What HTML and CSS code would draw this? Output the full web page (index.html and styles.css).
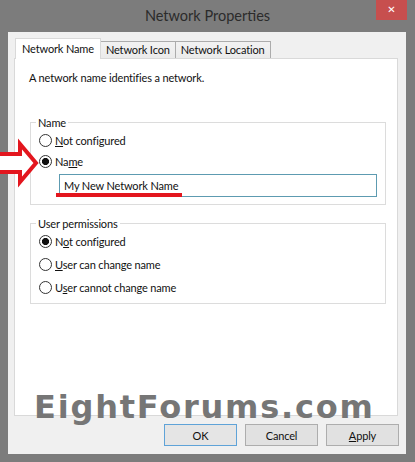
FILE: index.html
```html
<!DOCTYPE html>
<html lang="en">
<head>
<meta charset="utf-8">
<title>Network Properties</title>
<link rel="stylesheet" href="styles.css">
</head>
<body>
<div class="window">
  <div class="titlebar">
    <span></span>
    <span class="title">Network Properties</span>
    <button class="close" type="button" aria-label="Close">&#x2715;</button>
  </div>
  <div class="client">
    <div class="tabs">
      <div class="tab active">Network Name</div>
      <div class="tab">Network Icon</div>
      <div class="tab">Network Location</div>
    </div>
    <div class="panel">
      <p class="intro">A network name identifies a network.</p>
      <fieldset class="group group-name">
        <legend>Name</legend>
        <div class="rows rows-name">
          <label class="row"><input type="radio" name="n"><span><u>N</u>ot configured</span></label>
          <label class="row"><input type="radio" name="n" checked><span>Na<u>m</u>e</span></label>
        </div>
        <div class="field-wrap">
          <input class="textbox" type="text" value="My New Network Name">
          <span class="mark"></span>
        </div>
      </fieldset>
      <fieldset class="group group-perm">
        <legend>User permissions</legend>
        <div class="rows rows-perm">
          <label class="row"><input type="radio" name="p" checked><span>N<u>o</u>t configured</span></label>
          <label class="row"><input type="radio" name="p"><span><u>U</u>ser can change name</span></label>
          <label class="row"><input type="radio" name="p"><span>U<u>s</u>er cannot change name</span></label>
        </div>
      </fieldset>
    </div>
    <div class="buttons">
      <button class="btn default" type="button">OK</button>
      <button class="btn" type="button">Cancel</button>
      <button class="btn" type="button"><u>A</u>pply</button>
    </div>
  </div>
  <svg class="arrow" width="42" height="50" viewBox="0 0 42 50" aria-hidden="true">
    <polygon points="-4,16 20,16 20,6 36,25 20,44 20,34 -4,34" fill="#ffffff" stroke="#e3161e" stroke-width="4" stroke-linejoin="miter"/>
  </svg>
  <div class="watermark">EightForums.com</div>
</div>
</body>
</html>
```
FILE: styles.css
```css
* { box-sizing: border-box; }

html, body {
  margin: 0;
  padding: 0;
  background: #7c7c7c;
}

body {
  font-family: Lato, "Noto Sans", sans-serif;
  font-size: 11px;
  letter-spacing: -0.15px;
  line-height: 15px;
  color: #111;
}

.window {
  position: relative;
  width: 415px;
  height: 462px;
  background: #7c7c7c;
  padding: 0 9px 8px 8px;
  display: flex;
  flex-direction: column;
  overflow: hidden;
}

.titlebar {
  height: 32px;
  margin-right: -1px;
  display: grid;
  grid-template-columns: 1fr auto 1fr;
  align-items: start;
}

.title {
  font-size: 14.5px;
  letter-spacing: 0;
  line-height: 20px;
  color: #2b2b2b;
  margin-top: 6px;
  white-space: nowrap;
}

.close {
  justify-self: end;
  width: 31px;
  height: 20px;
  margin: 0;
  padding: 0;
  border: none;
  background: #c74f4e;
  color: #fff;
  font-family: "DejaVu Sans", sans-serif;
  font-size: 10px;
  font-weight: bold;
  line-height: 20px;
}

.client {
  flex: 1;
  background: #f0f0f0;
  padding: 6px 8px 8px 6px;
  display: flex;
  flex-direction: column;
}

.tabs {
  height: 20px;
  display: flex;
  align-items: flex-end;
  padding-left: 1px;
  position: relative;
  z-index: 1;
}

.tab {
  height: 17px;
  padding: 0 5px;
  line-height: 15px;
  border: 1px solid #acacac;
  border-bottom: none;
  border-left: none;
  background: linear-gradient(#f2f2f2, #ebebeb);
  white-space: nowrap;
}

.tab.active {
  height: 21px;
  margin-bottom: -1px;
  padding: 2px 6px 0 6px;
  border: 1px solid #d9d9d9;
  border-bottom: none;
  background: #fff;
}

.panel {
  flex: 1;
  background: #fff;
  border: 1px solid #d9d9d9;
  padding: 11px 11px 0 15px;
}

.intro {
  margin: 0 0 0 -1px;
}

.group {
  margin: 0;
  border: 1px solid #dcdcdc;
  padding: 0 8px;
  min-width: 0;
}

.group legend {
  padding: 0 2px;
  margin-left: -3px;
  line-height: 15px;
}

.group-name {
  margin-top: 30px;
  padding-top: 3px;
  padding-bottom: 7px;
}

.group-perm {
  margin-top: 11px;
  padding-top: 3px;
  padding-bottom: 8px;
}

.rows {
  display: flex;
  flex-direction: column;
}

.rows-name { gap: 6px; }
.rows-perm { gap: 8px; }

.row {
  display: flex;
  align-items: center;
  height: 15px;
  white-space: nowrap;
}

.row input {
  appearance: none;
  -webkit-appearance: none;
  width: 13px;
  height: 13px;
  margin: 0 3px 0 0;
  border: 1px solid #333;
  border-radius: 50%;
  background: #fff;
  flex: none;
}

.row input:checked {
  background: radial-gradient(circle, #111 0 3.2px, #fff 3.9px);
}

.field-wrap {
  position: relative;
  margin: 5px 0 0 20px;
}

.textbox {
  display: block;
  width: 100%;
  height: 23px;
  margin: 0;
  border: 1px solid #5d9bb1;
  padding: 0 4px;
  font: inherit;
  letter-spacing: inherit;
  color: #111;
  background: #fff;
  outline: none;
}

.mark {
  position: absolute;
  left: -3px;
  top: 19px;
  width: 126px;
  height: 4px;
  background: #e3161e;
}

.buttons {
  margin-top: 8px;
  display: flex;
  justify-content: flex-end;
  gap: 8px;
  margin-right: -1px;
}

.btn {
  width: 73px;
  height: 22px;
  margin: 0;
  padding: 0;
  border: 1px solid #adadad;
  background: #e1e1e1;
  font: inherit;
  letter-spacing: inherit;
  color: #111;
}

.btn.default {
  border-color: #5fa3d8;
  background: #e5e5e5;
}

.arrow {
  position: absolute;
  left: 0;
  top: 138px;
}

.watermark {
  position: absolute;
  left: 34px;
  top: 391px;
  font-family: "DejaVu Sans", sans-serif;
  font-weight: bold;
  font-size: 32px;
  line-height: 32px;
  letter-spacing: 1.8px;
  color: #767676;
  white-space: nowrap;
}
```
